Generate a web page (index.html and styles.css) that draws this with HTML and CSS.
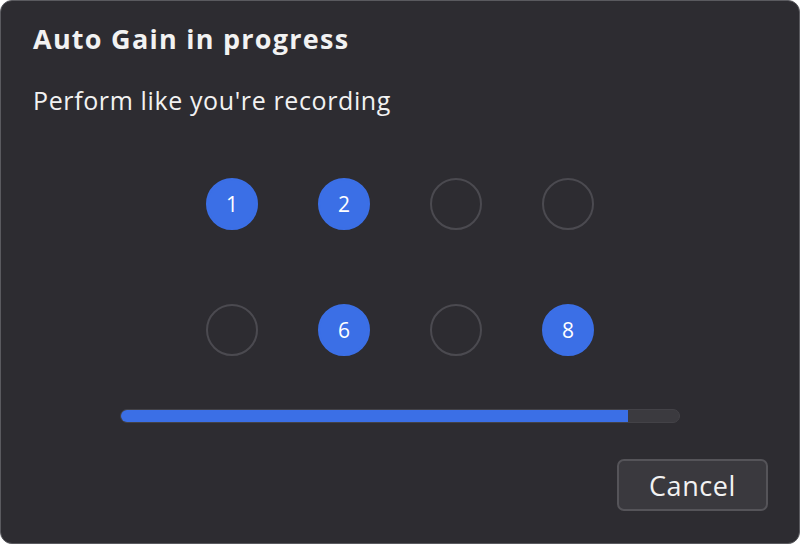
FILE: index.html
```html
<!DOCTYPE html>
<html>
<head>
<meta charset="utf-8">
<link rel="stylesheet" href="styles.css">
</head>
<body>
<div class="dialog">
  <h1 class="title">Auto Gain in progress</h1>
  <p class="subtitle">Perform like you're recording</p>
  <div class="pads">
    <div class="pad on">1</div>
    <div class="pad on">2</div>
    <div class="pad"></div>
    <div class="pad"></div>
    <div class="pad"></div>
    <div class="pad on">6</div>
    <div class="pad"></div>
    <div class="pad on">8</div>
  </div>
  <div class="track"><div class="fill" style="width:90.9%"></div></div>
  <div class="actions"><button class="cancel">Cancel</button></div>
</div>
</body>
</html>
```
FILE: styles.css
```css
html, body { margin: 0; padding: 0; background: #ffffff; }
body { width: 800px; height: 544px; font-family: "Open Sans", "Liberation Sans", sans-serif; }
.dialog {
  box-sizing: border-box;
  width: 800px; height: 544px;
  background: #2d2c31;
  border: 1px solid #5a5a5f;
  border-radius: 12px;
  padding: 21px 32px 0 32px;
  display: flex; flex-direction: column;
  color: #f2f2f2;
}
.title { margin: 0; font-size: 27px; font-weight: 700; line-height: 34px; letter-spacing: 1.25px; }
.subtitle { margin: 28px 0 0 0; font-size: 25px; font-weight: 400; line-height: 32px; letter-spacing: 0.62px; }
.pads {
  margin: 62px auto 0 auto;
  display: grid;
  grid-template-columns: repeat(4, 52px);
  column-gap: 60px; row-gap: 74px;
}
.pad {
  box-sizing: border-box;
  width: 52px; height: 52px; border-radius: 50%;
  border: 2px solid #4b4a50;
  display: flex; align-items: center; justify-content: center;
  font-size: 21px; color: #ffffff;
}
.pad.on { background: #3b6fe6; border-color: #3b6fe6; }
.track {
  margin: 53px auto 0 auto;
  width: 560px; height: 14px;
  background: #3b3a3f;
  border: 1px solid #434247;
  box-sizing: border-box;
  border-radius: 7px; overflow: hidden;
}
.fill { height: 100%; background: #3b6fe6; }
.actions { margin-top: 36px; display: flex; justify-content: flex-end; }
.cancel {
  box-sizing: border-box;
  width: 151px; height: 52px; margin-right: -1px;
  background: #3a393e; color: #f2f2f2;
  border: 2px solid #555459; border-radius: 7px;
  font-family: inherit; font-size: 27px; padding: 0; letter-spacing: 0.6px;
}
```
